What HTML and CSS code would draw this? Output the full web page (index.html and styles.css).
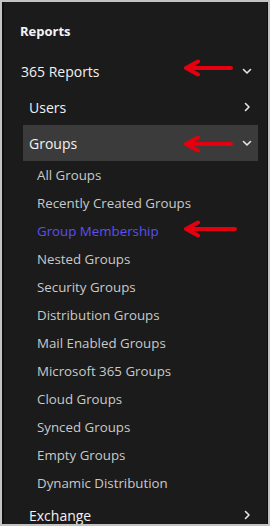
FILE: index.html
```html
<!DOCTYPE html>
<html>
<head>
<meta charset="utf-8">
<link rel="stylesheet" href="styles.css">
</head>
<body>
<div class="frame">
  <div class="panel">
    <div class="heading">Reports</div>
    <div class="row top">
      <span class="label">365 Reports</span>
      <svg class="arrow" viewBox="0 0 52 18" width="52" height="18"><path d="M3 9H48M15 2.5L3 9L15 15.5"/></svg>
      <svg class="chev" viewBox="0 0 10 10" width="10" height="10"><path d="M1.5 3.5L5 7L8.5 3.5"/></svg>
    </div>
    <div class="row mid">
      <span class="label">Users</span>
      <svg class="chev" viewBox="0 0 10 10" width="10" height="10"><path d="M3.5 1.5L7 5L3.5 8.5"/></svg>
    </div>
    <div class="row mid active">
      <span class="label">Groups</span>
      <svg class="arrow" viewBox="0 0 52 18" width="52" height="18"><path d="M3 9H48M15 2.5L3 9L15 15.5"/></svg>
      <svg class="chev" viewBox="0 0 10 10" width="10" height="10"><path d="M1.5 3.5L5 7L8.5 3.5"/></svg>
    </div>
    <ul class="sub">
      <li>All Groups</li>
      <li>Recently Created Groups</li>
      <li class="current">Group Membership<svg class="arrow arrow-sub" viewBox="0 0 56 18" width="56" height="18"><path d="M3 9H52M15 2.5L3 9L15 15.5"/></svg></li>
      <li>Nested Groups</li>
      <li>Security Groups</li>
      <li>Distribution Groups</li>
      <li>Mail Enabled Groups</li>
      <li>Microsoft 365 Groups</li>
      <li>Cloud Groups</li>
      <li>Synced Groups</li>
      <li>Empty Groups</li>
      <li>Dynamic Distribution</li>
    </ul>
    <div class="row mid">
      <span class="label">Exchange</span>
      <svg class="chev" viewBox="0 0 10 10" width="10" height="10"><path d="M3.5 1.5L7 5L3.5 8.5"/></svg>
    </div>
  </div>
</div>
</body>
</html>
```
FILE: styles.css
```css
html, body {
  margin: 0;
  padding: 0;
  background: #1b1b1b;
}
body {
  font-family: "Open Sans", "Noto Sans", sans-serif;
  font-size: 13px;
}
.frame {
  width: 270px;
  height: 526px;
  box-sizing: border-box;
  border: 2px solid #c4c4c4;
  overflow: hidden;
}
.panel {
  height: 100%;
  box-sizing: border-box;
  border-left: 2px solid #0f0f0f;
  border-right: 1px solid #0f0f0f;
  background: #1b1b1b;
  padding: 11px 9px 0 11px;
}
.heading {
  height: 36px;
  display: flex;
  align-items: center;
  padding-left: 5px;
  font-weight: 700;
  color: #f4f4f4;
}
.row {
  position: relative;
  height: 36px;
  display: flex;
  align-items: center;
  justify-content: space-between;
  color: #f2f2f2;
}
.top {
  margin-top: 4px;
  padding: 0 6px 0 6px;
  font-size: 14px;
}
.mid {
  margin-left: 8px;
  padding: 0 6px;
  font-size: 14px;
}
.active {
  background: #3b3b3b;
}
.chev {
  fill: none;
  stroke: #e6e6e6;
  stroke-width: 1.6;
  stroke-linecap: round;
  stroke-linejoin: round;
}
.arrow {
  position: absolute;
  fill: none;
  stroke: #e4000f;
  stroke-width: 4;
  stroke-linecap: round;
  stroke-linejoin: round;
}
.top .arrow {
  left: 168px;
  top: 6px;
}
.active .arrow {
  left: 160px;
  top: 10px;
}
.sub {
  list-style: none;
  margin: 0;
  padding: 0 0 0 22px;
}
.sub li {
  position: relative;
  height: 28px;
  display: flex;
  align-items: center;
  color: #c9c9c9;
  font-size: 13.3px;
}
.sub li.current {
  color: #5b4ff5;
}
.arrow-sub {
  left: 146px;
  top: 3px;
}
```
